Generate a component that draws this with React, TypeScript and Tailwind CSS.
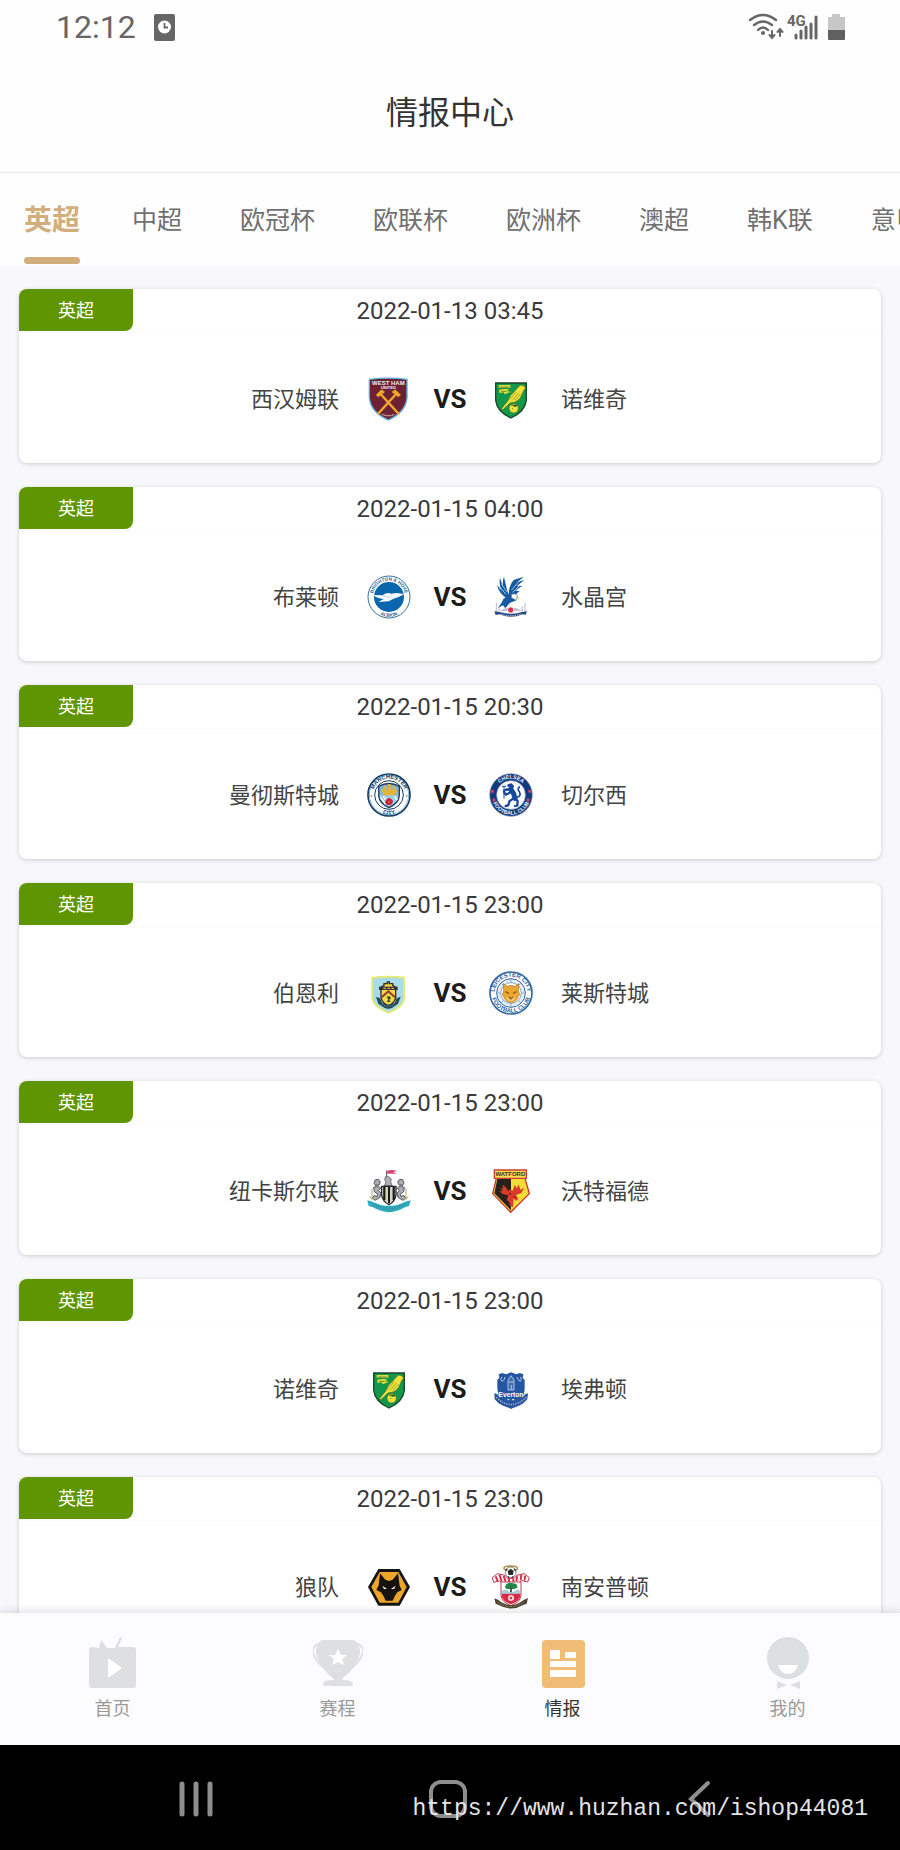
import { useState, type ReactNode } from "react";

type Match = {
  time: string;
  home: string;
  away: string;
  homeLogo: ReactNode;
  awayLogo: ReactNode;
};

function Crest({ label, children }: { label: string; children: ReactNode }) {
  return (
    <svg
      viewBox="0 0 132 132"
      role="img"
      aria-label={label}
      className="w-11 h-11 shrink-0 font-['Liberation_Sans',sans-serif] font-bold"
    >
      {children}
    </svg>
  );
}

// text on the upper and lower arc of a round crest
function RingText({
  id,
  top,
  bottom,
  color,
  size,
}: {
  id: string;
  top: string;
  bottom: string;
  color: string;
  size: number;
}) {
  return (
    <g fill={color} fontSize={size} textAnchor="middle">
      <path id={`${id}-top`} d="M17 66A49 49 0 0 1 115 66" fill="none" />
      <path id={`${id}-bottom`} d="M7 66A59 59 0 0 0 125 66" fill="none" />
      <text>
        <textPath href={`#${id}-top`} startOffset="50%">
          {top}
        </textPath>
      </text>
      <text>
        <textPath href={`#${id}-bottom`} startOffset="50%">
          {bottom}
        </textPath>
      </text>
    </g>
  );
}

function WestHam() {
  return (
    <Crest label="西汉姆联">
      <path d="M7 7Q64 0 120 7V62Q116 106 64 129Q11 106 7 62Z" fill="#6d2233" stroke="#58aede" strokeWidth="4" />
      <text x="64" y="24" fill="#f5e8ee" fontSize="18" textAnchor="middle">WEST HAM</text>
      <text x="64" y="35" fill="#f5e8ee" fontSize="12" textAnchor="middle">UNITED</text>
      <g stroke="#f6a92b" fill="#f6a92b">
        <path d="M40 50L96 112M88 50L32 112" strokeWidth="7" />
        <path d="M27 54L43 38L53 44L50 49L45 49L35 60ZM101 54L85 38L75 44L78 49L83 49L93 60Z" strokeWidth="1" />
      </g>
      <path d="M46 112Q64 120 82 112" fill="none" stroke="#e4b9c1" strokeWidth="4" strokeDasharray="4 2" />
    </Crest>
  );
}

function Norwich() {
  return (
    <Crest label="诺维奇">
      <path d="M20 18H112V70Q108 104 66 123Q24 104 20 70Z" fill="#12984a" stroke="#1b4527" strokeWidth="4" />
      <path d="M29 24H64V32H29ZM31 38Q46 34 60 37L55 43L66 44L47 52L44 46L31 48Z" fill="#e7dd3b" />
      <path d="M32 30H60M36 43H53" stroke="#2c6e33" strokeWidth="2" />
      <path d="M104 26Q93 20 87 31L77 42Q62 54 56 72L37 95L42 98L63 78Q91 77 100 51Q103 40 110 33Z" fill="#eee13a" stroke="#39652b" strokeWidth="2" />
      <path d="M81 44L62 68M88 47L70 70M95 51L78 69" stroke="#818e2d" strokeWidth="2" />
      <circle cx="74" cy="94" r="14" fill="#efe23b" stroke="#416b2b" strokeWidth="2" />
      <path d="M66 83L78 89L87 84M69 94L72 96M76 76V87" stroke="#67842d" strokeWidth="3" />
    </Crest>
  );
}

function Brighton() {
  return (
    <Crest label="布莱顿">
      <circle cx="66" cy="66" r="63" fill="#fff" stroke="#3c7199" strokeWidth="3" />
      <circle cx="66" cy="66" r="45" fill="#0965ac" />
      <RingText id="brighton" top="BRIGHTON & HOVE" bottom="ALBION" color="#245d8a" size={14} />
      <path d="M18 60L47 61Q60 50 73 56L88 54L112 57Q98 66 80 71L65 79L34 81L50 72Q30 71 18 60Z" fill="#f7fbff" />
      <path d="M47 62L73 69M75 57L67 64" stroke="#a3c6df" strokeWidth="2" />
    </Crest>
  );
}

function Palace() {
  return (
    <Crest label="水晶宫">
      <g fill="#185a9f">
        <path d="M58 74Q28 54 24 30L38 47Q29 26 33 8L42 37Q40 15 45 6L53 40Q56 55 63 66Z" />
        <path d="M59 63Q58 33 74 15L104 5L85 22L106 15L83 34L100 32L79 47L92 48L75 63L79 69L68 80Z" />
        <path d="M43 72L60 61L78 62L82 76L62 84L49 100L42 91L27 99L39 81Z" />
      </g>
      <path d="M31 34L51 58M38 28L54 51M68 45L89 20M71 52L92 32" stroke="#9fc1df" strokeWidth="3" />
      <path d="M67 58Q78 53 86 62L81 76L67 68Z" fill="#f8fbfd" stroke="#447099" strokeWidth="2" />
      <path d="M84 64L91 70L82 72Z" fill="#dbb85b" />
      <path d="M22 84V114M108 84V114M30 94V112M100 94V112" stroke="#9297ad" strokeWidth="2" />
      <path d="M32 108L50 99H81L99 108Z" fill="#bbc1d6" />
      <circle cx="65" cy="105" r="9" fill="#d72e4c" stroke="#fff" strokeWidth="2" />
      <path d="M16 109L35 112Q66 121 96 112L114 109L110 119L101 118Q66 133 31 118L20 120Z" fill="#284784" />
      <path d="M36 117Q66 128 96 117" fill="none" stroke="#d4dbea" strokeWidth="3" strokeDasharray="4 3" />
    </Crest>
  );
}

function ManCity() {
  return (
    <Crest label="曼彻斯特城">
      <circle cx="66" cy="66" r="63" fill="#fff" stroke="#183c62" strokeWidth="5" />
      <circle cx="66" cy="66" r="59" fill="none" stroke="#7cb9db" strokeWidth="3" />
      <circle cx="66" cy="66" r="43" fill="#fff" stroke="#183c62" strokeWidth="3" />
      <RingText id="city" top="MANCHESTER" bottom="CITY" color="#173b5e" size={17} />
      <path d="M35 40Q66 23 97 40V68Q95 91 66 104Q37 91 35 68Z" fill="#7db6d8" stroke="#233f5e" strokeWidth="4" />
      <path d="M38 67H94Q93 89 66 100Q40 88 38 67Z" fill="#a6d0e6" />
      <path d="M40 73L57 95M49 69L67 98M83 70L91 81" stroke="#fff" strokeWidth="4" />
      <path d="M43 49H51V39H58V49H63V33H71V49H77V40H84V52H92L84 67H49Z" fill="#e4b33e" />
      <path d="M66 74L73 78L78 83L76 91L70 97L60 96L54 89L56 81Z" fill="#c8243a" />
      <circle cx="67" cy="87" r="2" fill="#dda13f" />
      <circle cx="13" cy="69" r="3" fill="#c79f4a" />
      <circle cx="119" cy="69" r="3" fill="#c79f4a" />
    </Crest>
  );
}

function Chelsea() {
  return (
    <Crest label="切尔西">
      <circle cx="66" cy="66" r="64" fill="#123a80" stroke="#8c9bae" strokeWidth="2" />
      <circle cx="66" cy="66" r="43" fill="#fff" stroke="#9da9c2" strokeWidth="2" />
      <RingText id="chelsea" top="CHELSEA" bottom="FOOTBALL CLUB" color="#f1f6ff" size={16} />
      <g fill="none" stroke="#1748a0" strokeLinecap="round" strokeLinejoin="round">
        <path d="M66 50L74 62L78 76" strokeWidth="15" />
        <path d="M62 59L51 65L46 59M64 52L53 49L45 54M72 77L61 85L58 97L50 99M79 77L86 84L85 97L78 99" strokeWidth="7" />
        <path d="M83 73Q98 70 91 56Q84 48 91 42" strokeWidth="5" />
        <path d="M45 41V76M40 40H50" strokeWidth="3" />
      </g>
      <path d="M53 39L58 33L67 31L75 38L73 47L62 50L55 47L61 43Z" fill="#1748a0" />
      <circle cx="10" cy="55" r="5" fill="#ce4262" />
      <circle cx="122" cy="55" r="5" fill="#ce4262" />
      <circle cx="15" cy="81" r="5" fill="#ce4262" />
      <circle cx="117" cy="81" r="5" fill="#ce4262" />
    </Crest>
  );
}

function Burnley() {
  return (
    <Crest label="伯恩利">
      <path d="M16 20Q64 14 111 20V82Q108 108 64 125Q20 108 16 82Z" fill="#a9dceb" stroke="#e1eb75" strokeWidth="6" />
      <path d="M42 49L51 43V38H61V33H67V38H77V43L86 49V80Q83 96 64 105Q45 96 42 80Z" fill="#f5d944" stroke="#362d2b" strokeWidth="4" />
      <path d="M36 47H92V57H36Z" fill="#3b2e32" />
      <path d="M49 52H57M61 52H69M73 52H81" stroke="#ead57b" strokeWidth="3" />
      <path d="M44 79L64 61L84 79" fill="none" stroke="#943a2b" strokeWidth="6" />
      <path d="M58 78L68 75L72 83L66 86L71 93H60L64 84Z" fill="#2b4c35" />
      <path d="M27 77L39 82L45 96Q64 105 83 96L89 82L101 77L93 98L76 110Q64 116 52 110L34 98Z" fill="#264856" />
      <path d="M45 100Q64 111 83 100" fill="none" stroke="#9dbbc0" strokeWidth="2" strokeDasharray="3 3" />
    </Crest>
  );
}

function Leicester() {
  return (
    <Crest label="莱斯特城">
      <circle cx="66" cy="66" r="63" fill="#fff" stroke="#2f68a2" strokeWidth="5" />
      <circle cx="66" cy="66" r="43" fill="#e5edf4" stroke="#2f68a2" strokeWidth="3" />
      <RingText id="leicester" top="LEICESTER CITY" bottom="FOOTBALL CLUB" color="#2c629a" size={18} />
      <g stroke="#8faac1" strokeWidth="3" fill="#fff">
        <path d="M66 24V108M25 66H107M37 37L95 95M95 37L37 95" />
        <circle cx="66" cy="66" r="31" />
      </g>
      <path d="M43 38L54 46L66 43L78 46L89 38L88 60L92 70L83 86L73 94H58L48 85L40 70L44 59Z" fill="#eba72f" stroke="#a1752e" strokeWidth="2" />
      <path d="M49 62L60 67M82 62L72 67M60 78L66 84L72 78" stroke="#865a26" strokeWidth="4" fill="none" />
      <path d="M49 78L61 82L65 88L70 82L82 77L73 91H58Z" fill="#f3c768" />
    </Crest>
  );
}

function Newcastle() {
  return (
    <Crest label="纽卡斯尔联">
      <path d="M59 5V36" stroke="#555" strokeWidth="3" />
      <path d="M60 5Q74 1 91 6L78 10L90 14L61 14Z" fill="#d94173" />
      <path d="M53 29L57 21L66 24L73 30L71 39L76 50H52L56 41Z" fill="#aeb0b4" stroke="#444" strokeWidth="2" />
      <path d="M44 52H87V78Q84 98 66 107Q47 98 44 78Z" fill="#fff" stroke="#242424" strokeWidth="4" />
      <path d="M52 54V94M66 54V103M80 54V94" stroke="#171717" strokeWidth="7" />
      <path d="M59 55V99M73 55V99" stroke="#c4b05a" strokeWidth="2" />
      <g fill="#a9acb2" stroke="#54575c" strokeWidth="3">
        <path d="M21 43L25 32L34 31L40 39L36 48L28 48L42 58L34 64L42 72L39 85L24 94L16 87L22 79L30 83L32 75L22 68L20 55L28 53Z" />
        <path d="M111 43L107 32L98 31L92 39L96 48L104 48L90 58L98 64L90 72L93 85L108 94L116 87L110 79L102 83L100 75L110 68L112 55L104 53Z" />
      </g>
      <path d="M15 58V91M8 82L15 91L24 82M117 58V91M108 82L117 91L124 82" stroke="#b9aa66" strokeWidth="3" fill="none" />
      <path d="M1 94L17 98Q66 123 115 98L131 94L126 111L114 115Q66 144 18 115L5 111Z" fill="#2baabe" />
      <path d="M20 107Q66 131 112 107" fill="none" stroke="#4f8795" strokeWidth="4" strokeDasharray="4 3" />
    </Crest>
  );
}

function Watford() {
  return (
    <Crest label="沃特福德">
      <path d="M22 28H108L121 74L65 130L11 74Z" fill="#f4dd37" stroke="#cc322d" strokeWidth="4" />
      <path d="M25 30H66V124L16 73Z" fill="#27201e" />
      <path d="M16 3H112V28H16Z" fill="#f6dc55" stroke="#cf3d32" strokeWidth="4" />
      <text x="64" y="22" fill="#383023" fontSize="18" textAnchor="middle">WATFORD</text>
      <path d="M33 54L41 61L42 47L52 56L57 67L63 61L71 65L77 48L84 58L89 46L94 62L106 57L96 73L81 78L88 89L81 96L74 88L72 115L63 110L61 99L53 93L58 79L43 76L30 67L41 67Z" fill="#da3b2d" />
      <path d="M59 72L67 77M73 83L80 86" stroke="#851f1d" strokeWidth="4" />
    </Crest>
  );
}

function Everton() {
  return (
    <Crest label="埃弗顿">
      <path d="M29 22L40 18L51 22L66 16L82 22L92 18L103 22L101 32L107 39V64Q105 106 66 125Q27 106 25 64V39L31 32Z" fill="#2456a2" />
      <path d="M57 69V39L66 26L75 39V69ZM59 45H73M67 54V68" fill="#416db0" stroke="#eef4ff" strokeWidth="2" />
      <path d="M38 30Q32 38 39 43Q47 40 48 30M84 30Q87 41 94 43Q100 38 94 30" fill="none" stroke="#b8c9e5" strokeWidth="3" />
      <text x="66" y="89" fill="#fff" fontSize="20" textAnchor="middle">Everton</text>
      <path d="M55 98H61M69 98H76" stroke="#c9daf0" strokeWidth="4" />
      <path d="M16 79L24 81Q42 107 66 109Q91 107 109 81L117 79L115 97L103 109L90 116L66 125L42 116L29 109L17 97Z" fill="#2d559e" />
      <path d="M22 91Q66 134 112 91" fill="none" stroke="#9fb4d6" strokeWidth="4" strokeDasharray="4 3" />
    </Crest>
  );
}

function Wolves() {
  return (
    <Crest label="狼队">
      <path d="M34 12H98L129 66L98 122H34L3 66Z" fill="#151515" />
      <path d="M38 21H94L119 66L94 113H38L13 66Z" fill="#eda62a" />
      <path d="M39 25L55 44L66 48L77 44L93 25L98 62L104 75L91 82L84 92L77 107H56L49 92L42 82L28 75L35 61Z" fill="#17130f" />
      <path d="M46 62L60 72L51 72ZM86 62L72 72L81 72Z" fill="#fff" />
    </Crest>
  );
}

function Southampton() {
  return (
    <Crest label="南安普顿">
      <ellipse cx="65" cy="10" rx="20" ry="7" fill="none" stroke="#b2954d" strokeWidth="5" />
      <circle cx="65" cy="22" r="16" fill="#fff" stroke="#555" strokeWidth="2" />
      <path d="M58 19L65 14L72 19L70 28H60ZM50 17L55 12M80 17L75 12M57 34L60 39M73 34L69 39" fill="#222" stroke="#333" strokeWidth="4" />
      <path d="M10 38L25 26L48 31L55 40H75L83 31L106 26L121 38L116 51L98 47L91 53H39L32 48L14 52Z" fill="#fff" stroke="#c4324c" strokeWidth="3" />
      <path d="M20 34L26 48M31 29L38 48M44 33L50 50M60 41V52M73 41V52M85 34L82 48M97 29L95 46M109 32L106 47" stroke="#d32e4a" strokeWidth="6" />
      <path d="M36 51H96V91Q95 111 66 122Q37 111 36 91Z" fill="#fff" stroke="#b84153" strokeWidth="3" />
      <path d="M38 85H94V94Q91 109 66 118Q41 109 38 94Z" fill="#dc2747" />
      <path d="M38 78Q48 71 58 78T78 78T94 78V86H38Z" fill="#a9ccdb" />
      <path d="M48 67L52 57L62 53L73 55L82 57L86 67L76 72H53Z" fill="#20864c" />
      <path d="M66 63V82" stroke="#336e41" strokeWidth="6" />
      <circle cx="66" cy="99" r="9" fill="#f5e8df" />
      <circle cx="66" cy="99" r="4" fill="#d62e4d" />
      <path d="M16 100L27 104Q66 136 105 104L117 99L113 116L103 120Q66 141 29 120L20 116Z" fill="#4c4330" />
      <path d="M27 112Q66 137 105 112" fill="none" stroke="#b1a57c" strokeWidth="3" strokeDasharray="4 4" />
    </Crest>
  );
}

const leagues = ["英超", "中超", "欧冠杯", "欧联杯", "欧洲杯", "澳超", "韩K联", "意甲"];

const matches: Match[] = [
  { time: "2022-01-13 03:45", home: "西汉姆联", away: "诺维奇", homeLogo: <WestHam />, awayLogo: <Norwich /> },
  { time: "2022-01-15 04:00", home: "布莱顿", away: "水晶宫", homeLogo: <Brighton />, awayLogo: <Palace /> },
  { time: "2022-01-15 20:30", home: "曼彻斯特城", away: "切尔西", homeLogo: <ManCity />, awayLogo: <Chelsea /> },
  { time: "2022-01-15 23:00", home: "伯恩利", away: "莱斯特城", homeLogo: <Burnley />, awayLogo: <Leicester /> },
  { time: "2022-01-15 23:00", home: "纽卡斯尔联", away: "沃特福德", homeLogo: <Newcastle />, awayLogo: <Watford /> },
  { time: "2022-01-15 23:00", home: "诺维奇", away: "埃弗顿", homeLogo: <Norwich />, awayLogo: <Everton /> },
  { time: "2022-01-15 23:00", home: "狼队", away: "南安普顿", homeLogo: <Wolves />, awayLogo: <Southampton /> },
];

function StatusBar() {
  return (
    <div className="h-[54px] shrink-0 pl-14 pr-[54px] flex items-center justify-between text-[#666]">
      <div className="flex items-center gap-[18px]">
        <span className="text-[32px] leading-8">12:12</span>
        <svg viewBox="0 0 21 27" className="w-[21px] h-[27px]" aria-hidden="true">
          <rect width="21" height="27" rx="2" fill="#666" />
          <circle cx="10.5" cy="13" r="6.5" fill="#fff" />
          <path d="M10.5 9V13.5H14" fill="none" stroke="#666" strokeWidth="1.8" />
        </svg>
      </div>
      <svg viewBox="0 0 98 28" className="w-[98px] h-7" aria-hidden="true">
        <g fill="none" stroke="#666" strokeWidth="2.4" strokeLinecap="round">
          <path d="M2 7Q15 -3 28 7" />
          <path d="M6 12Q15 5 24 12" />
          <path d="M10 17Q15 12 20 17" />
          <path d="M24 18V24M21.5 22L24 25L26.5 22M32 23V16M29.5 19L32 16L34.5 19" strokeWidth="2" />
          <path d="M48 25V22M53 25V18M58 25V14M63 25V11M68 25V4" strokeWidth="3" />
        </g>
        <circle cx="15" cy="20" r="2" fill="#666" />
        <text x="39" y="13" fill="#666" fontSize="15" fontWeight="700">4G</text>
        <path d="M84 1H92V4H97V17H80V4H84Z" fill="#c7c7c7" />
        <path d="M80 17H97V26Q97 27 96 27H81Q80 27 80 26Z" fill="#606060" />
      </svg>
    </div>
  );
}

function MatchCard({ match }: { match: Match }) {
  return (
    <article className="h-[174px] shrink-0 bg-white rounded-lg shadow-[0_1px_4px_rgba(0,0,0,0.18)]">
      <header className="h-11 flex items-start border-b border-[#fafafa]">
        <span className="w-[114px] h-[42px] rounded-tl-lg rounded-br-lg bg-[#5f9500] text-white text-lg leading-[43px] text-center">
          英超
        </span>
        <time className="flex-1 text-center text-2xl leading-[44px] text-[#3a3a3c]">{match.time}</time>
        <span className="w-[114px]"></span>
      </header>
      <div className="h-[130px] pt-0.5 flex items-center text-[22px] text-[#444]">
        <div className="flex-1 flex items-center justify-end gap-7">
          <span>{match.home}</span>
          {match.homeLogo}
        </div>
        <strong className="w-[78px] text-center text-[26px] font-bold text-[#1c1c1c]">VS</strong>
        <div className="flex-1 flex items-center gap-7">
          {match.awayLogo}
          <span>{match.away}</span>
        </div>
      </div>
    </article>
  );
}

const navItems = [
  {
    label: "首页",
    icon: (
      <>
        <path d="M11 11L13 3L19 11L27 11L32 0L34 1L30 10H45Q48 10 48 13V48Q48 51 45 51H4Q1 51 1 48V13Q1 10 4 10Z" fill="#dedfe1" />
        <path d="M20 21L34 31L20 41Z" fill="#fff" />
      </>
    ),
  },
  {
    label: "赛程",
    icon: (
      <>
        <path d="M7 6Q-3 10 1 18Q3 24 11 31M43 6Q53 10 49 18Q47 24 39 31" fill="none" stroke="#dedfe1" strokeWidth="2" />
        <path d="M10 3H40Q43 3 44 7Q49 12 46 20Q41 33 30 41L29 43Q40 43 40 47Q40 49 37 49H13Q10 49 10 47Q10 43 21 43L20 41Q9 33 4 20Q1 12 6 7Q7 3 10 3Z" fill="#dedfe1" />
        <path d="M25 12L28 18L34 18L29 22L31 28L25 25L19 28L21 22L16 18L22 18Z" fill="#fff" />
      </>
    ),
  },
  {
    label: "情报",
    icon: (
      <>
        <rect x="4" y="3" width="43" height="48" rx="4" fill="#efbd75" />
        <path d="M12 13H22V22H12ZM27 15H38V21H27ZM12 24H38V30H12ZM12 33H38V40H12Z" fill="#fff" />
      </>
    ),
  },
  {
    label: "我的",
    icon: (
      <>
        <circle cx="25" cy="21" r="21" fill="#dcdfe1" />
        <path d="M15 28H35Q32 37 25 37Q18 37 15 28Z" fill="#fff" />
        <path d="M14 44L24 48L14 52ZM37 44L27 48L37 52Z" fill="#dcdfe1" />
      </>
    ),
  },
];

function App() {
  const [league, setLeague] = useState("英超");
  const [page, setPage] = useState("情报");

  return (
    <div className="h-screen flex flex-col bg-[#f8f8fc] font-[Roboto,'Noto_Sans_CJK_SC',sans-serif]">
      <div className="bg-[#fefefe] shrink-0">
        <StatusBar />
        <h1 className="h-[119px] border-b border-[#e7e7e7] text-center text-[32px] leading-[119px] text-[#333]">
          情报中心
        </h1>
        <nav className="h-[93px] pl-6 flex overflow-hidden whitespace-nowrap">
          {leagues.map((name) => (
            <button
              key={name}
              onClick={() => setLeague(name)}
              className={
                name === league
                  ? "shrink-0 mr-[52px] pt-1 text-[28px] font-bold text-[#d1ae7b] flex flex-col justify-between"
                  : "shrink-0 mr-[58px] pt-0.5 text-[25px] text-[#707070]"
              }
            >
              {name === league ? (
                <>
                  <span className="leading-[88px] h-20">{name}</span>
                  <span className="w-full h-[7px] mb-0.5 rounded-sm bg-[#d1ae7b]"></span>
                </>
              ) : (
                name
              )}
            </button>
          ))}
        </nav>
      </div>

      <main className="flex-1 min-h-0 overflow-y-auto [scrollbar-width:none] px-[19px] pt-[23px] flex flex-col gap-6">
        {matches.map((match) => (
          <MatchCard key={match.time + match.home} match={match} />
        ))}
      </main>

      <nav className="relative h-[132px] shrink-0 flex bg-[#fcfcfe] shadow-[0_-2px_8px_rgba(0,0,0,0.12)]">
        {navItems.map((item) => (
          <button
            key={item.label}
            onClick={() => setPage(item.label)}
            className={`flex-1 pt-6 flex flex-col items-center gap-1.5 text-lg ${
              item.label === page ? "text-[#333]" : "text-[#999]"
            }`}
          >
            <svg viewBox="0 0 50 52" className="w-[50px] h-[52px]" aria-hidden="true">
              {item.icon}
            </svg>
            <span>{item.label}</span>
          </button>
        ))}
      </nav>

      <footer className="relative h-[105px] shrink-0 bg-black pr-1 pt-[34px] flex justify-center items-start gap-[212px]">
        <button aria-label="最近任务">
          <svg viewBox="0 0 40 40" className="w-10 h-10" fill="none" stroke="#8e8e8e" strokeWidth="5" strokeLinecap="round">
            <path d="M6 5V35M20 5V35M34 5V35" />
          </svg>
        </button>
        <button aria-label="主屏幕">
          <svg viewBox="0 0 40 40" className="w-10 h-10" fill="none" stroke="#8e8e8e" strokeWidth="4">
            <rect x="3" y="3" width="34" height="34" rx="10" />
          </svg>
        </button>
        <button aria-label="返回">
          <svg viewBox="0 0 40 40" className="w-10 h-10" fill="none" stroke="#8e8e8e" strokeWidth="4" strokeLinecap="round">
            <path d="M28 4L11 20L28 36" />
          </svg>
        </button>
        <a
          href="https://www.huzhan.com/ishop44081"
          className="absolute right-8 top-12 text-[23px] leading-8 text-[#e4e4e4] font-['Liberation_Mono',monospace]"
        >
          https://www.huzhan.com/ishop44081
        </a>
      </footer>
    </div>
  );
}

export default App;
